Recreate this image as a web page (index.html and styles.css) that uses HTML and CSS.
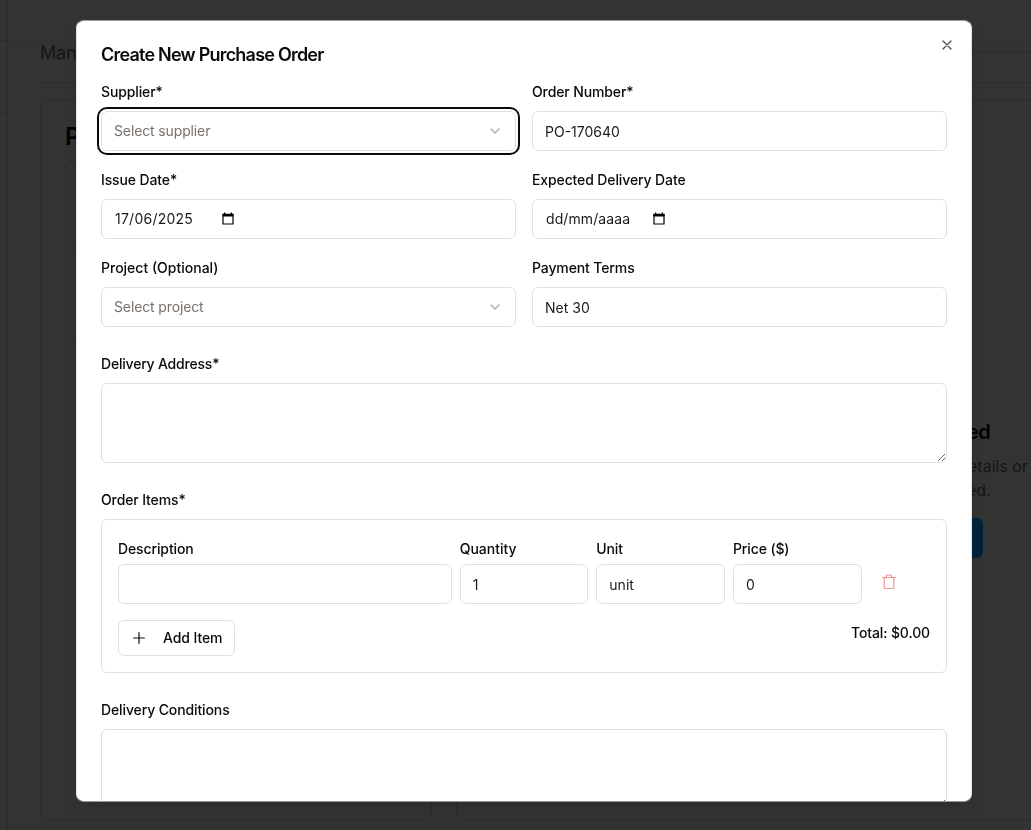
FILE: index.html
```html
<!DOCTYPE html>
<html lang="en">
<head>
<meta charset="utf-8">
<title>Create New Purchase Order</title>
<link rel="stylesheet" href="styles.css">
</head>
<body>
<div class="page">
  <aside class="sidebar"><div class="side-head"></div><div class="side-nav"></div></aside>
  <main class="main">
    <div class="topbar"></div>
    <div class="subhead"><span class="subtitle">Mana</span><span class="tabs-line"></span></div>
    <div class="columns">
      <section class="card list">
        <h2 class="list-title">P</h2>
        <div class="list-item"></div>
        <div class="list-item"></div>
      </section>
      <section class="card detail">
        <div class="empty">
          <h3 class="empty-title">ed</h3>
          <p class="empty-text first">etails or</p>
          <p class="empty-text">ed.</p>
          <div class="empty-button"></div>
        </div>
      </section>
    </div>
  </main>
</div>

<div class="dialog" role="dialog">
  <button class="close" aria-label="Close"><svg width="16" height="16" viewBox="0 0 24 24"><path d="M18 6 6 18M6 6l12 12"/></svg></button>
  <h1 class="title">Create New Purchase Order</h1>
  <div class="fields">
    <div class="field"><label class="label">Supplier*</label>
      <div class="control select focused"><span>Select supplier</span><svg class="chevron" width="16" height="16" viewBox="0 0 24 24"><path d="m6 9 6 6 6-6"/></svg></div></div>
    <div class="field"><label class="label">Order Number*</label><input class="control" value="PO-170640"></div>
    <div class="field"><label class="label">Issue Date*</label>
      <div class="control date"><span class="date-text digits">17/06/2025</span><svg class="calendar" width="12" height="14" viewBox="0 0 12 14"><path class="cal-frame" d="M1 2.500h10v9.500H1z"/><path class="cal-fill" d="M.4 1.800h11.200v2.700H.4zM2 .6h1.300v2H2zM8.700.6H10v2H8.700z"/></svg></div></div>
    <div class="field"><label class="label">Expected Delivery Date</label>
      <div class="control date"><span class="date-text">dd/mm/aaaa</span><svg class="calendar" width="12" height="14" viewBox="0 0 12 14"><path class="cal-frame" d="M1 2.500h10v9.500H1z"/><path class="cal-fill" d="M.4 1.800h11.200v2.700H.4zM2 .6h1.300v2H2zM8.700.6H10v2H8.700z"/></svg></div></div>
    <div class="field"><label class="label loose">Project (Optional)</label>
      <div class="control select"><span>Select project</span><svg class="chevron" width="16" height="16" viewBox="0 0 24 24"><path d="m6 9 6 6 6-6"/></svg></div></div>
    <div class="field"><label class="label">Payment Terms</label><input class="control" value="Net 30"></div>
  </div>
  <div class="field section"><label class="label tight">Delivery Address*</label><textarea class="control area"></textarea></div>
  <div class="field section"><label class="label">Order Items*</label>
    <div class="items">
      <div class="item-row">
        <div class="item-field wide"><label class="label">Description</label><input class="control"></div>
        <div class="item-field"><label class="label loose">Quantity</label><input class="control" value="1"></div>
        <div class="item-field"><label class="label">Unit</label><input class="control" value="unit"></div>
        <div class="item-field"><label class="label">Price ($)</label><input class="control" value="0"></div>
        <button class="delete" aria-label="Delete"><svg width="16" height="16" viewBox="0 0 16 16"><path d="M1.500 3.500h13M3.200 3.500v9.700q0 1.300 1.300 1.300h7q1.300 0 1.300-1.300V3.500M5.300 3.300V2.300q0-1.300 1.300-1.300h2.800q1.300 0 1.300 1.300v1"/></svg></button>
      </div>
      <div class="item-foot">
        <button class="add"><svg width="16" height="16" viewBox="0 0 24 24"><path d="M4 12h16M12 4v16"/></svg><span>Add Item</span></button>
        <span class="total">Total: $0.00</span>
      </div>
    </div>
  </div>
  <div class="field section"><label class="label">Delivery Conditions</label><textarea class="control area"></textarea></div>
</div>
</body>
</html>
```
FILE: styles.css
```css
* { box-sizing: border-box; }
body { margin: 0; width: 1031px; height: 830px; overflow: hidden; background: #333; font-family: Inter, "Liberation Sans", sans-serif; font-size: 14px; color: #0c0a09; }
h1, h2, h3, p { margin: 0; }
svg { fill: none; stroke: currentColor; stroke-width: 2; stroke-linecap: round; stroke-linejoin: round; flex: none; }
button { font: inherit; color: inherit; background: none; border: 0; padding: 0; }

.page { display: flex; height: 830px; overflow: hidden; }
.sidebar { width: 8px; flex: none; border-right: 1px solid #2c2c2c; }
.side-head { height: 41px; border-bottom: 1px solid #2c2c2c; }
.side-nav { height: 73px; border-bottom: 1px solid #2c2c2c; }
.main { flex: 1; min-width: 0; }
.topbar { height: 41px; border-bottom: 1px solid #303030; }
.subhead { height: 42px; margin-left: 32px; border-bottom: 1px solid #2c2c2c; display: flex; justify-content: space-between; }
.subtitle { font-size: 18px; line-height: 23px; letter-spacing: -.2px; color: #171514; }
.tabs-line { width: 100px; height: 11px; border-bottom: 1px solid #292929; }
.columns { display: flex; gap: 24px; margin: 16px 0 0 32px; height: 722px; }
.card { border: 1px solid #2c2c2c; border-radius: 8px; flex: none; }
.list { width: 392px; padding: 21px 24px; }
.list-title { font-size: 24px; line-height: 32px; font-weight: 600; margin-bottom: 7px; color: #020202; }
.list-item { height: 86px; margin-bottom: 8px; border: 1px solid #2c2c2c; border-radius: 8px; }
.detail { width: 700px; padding: 318px 0 0 510px; }
.empty-title { font-size: 20px; line-height: 28px; font-weight: 600; letter-spacing: -.5px; color: #020202; }
.empty-text { font-size: 16px; line-height: 24px; color: #171514; }
.first { margin-top: 8px; padding-left: 1px; }
.empty-button { width: 16px; height: 40px; margin-top: 16px; border-radius: 0 6px 6px 0; background: #00223b; }

.dialog { position: fixed; left: 76px; top: 20px; width: 896px; height: 782px; overflow: hidden; padding: 24px; background: #fff; border: 1px solid #e0e0e0; border-top-color: #999; border-bottom-color: #999; border-radius: 8px; box-shadow: 0 10px 15px -3px rgba(0,0,0,.1); }
.close { position: absolute; right: 16px; top: 16px; width: 16px; height: 16px; opacity: .7; }
.close svg { display: block; }
.title { font-size: 18px; line-height: 20px; font-weight: 600; letter-spacing: -.78px; margin-bottom: 14px; }
.fields { display: grid; grid-template-columns: 1fr 1fr; gap: 16px; }
.label { display: block; height: 24px; line-height: 26px; font-weight: 500; letter-spacing: -.12px; margin-bottom: 8px; white-space: nowrap; }
.loose { letter-spacing: 0; }
.tight { letter-spacing: -.2px; }
.control { display: flex; align-items: center; width: 100%; height: 40px; padding: 0 12px; border: 1px solid #e1e0e0; border-radius: 6px; background: #fff; font: inherit; color: #1c1a19; outline: 0; }
.select { justify-content: space-between; color: #78716c; letter-spacing: -.13px; }
.select span, .date-text { margin-top: -2px; }
.chevron { color: #aaa; }
.focused { box-shadow: 0 0 0 2px #fff, 0 0 0 4px #0c0a09; }
.date { padding: 0 13px; }
.date-text { width: 107px; letter-spacing: .1px; }
.digits { letter-spacing: .24px; }
.calendar { margin-top: -1px; color: #000; }
.cal-frame { stroke-width: 1.200; }
.cal-fill { fill: #000; stroke: none; }
.section { margin-top: 24px; }
.area { display: block; height: 80px; resize: vertical; }
.items { height: 154px; padding: 16px; border: 1px solid #e1e0e0; border-radius: 6px; }
.item-row { display: grid; grid-template-columns: repeat(12, 1fr); gap: 8px; }
.item-field { grid-column: span 2; }
.item-field .label { margin-bottom: 4px; }
.item-row .wide { grid-column: span 5; }
.delete { width: 38px; height: 36px; margin-top: 28px; display: flex; align-items: center; justify-content: center; color: #f88f8f; }
.delete svg { stroke-width: 1.200; }
.item-foot { display: flex; justify-content: space-between; align-items: flex-start; margin-top: 16px; }
.add { display: flex; align-items: center; gap: 16px; width: 117px; height: 36px; padding: 0 12px; border: 1px solid #e1e0e0; border-radius: 6px; font-weight: 500; letter-spacing: -.1px; white-space: nowrap; }
.add span { margin-top: -2px; }
.add svg { stroke-width: 1.800; }
.total { line-height: 26px; font-weight: 500; letter-spacing: -.12px; }
```
